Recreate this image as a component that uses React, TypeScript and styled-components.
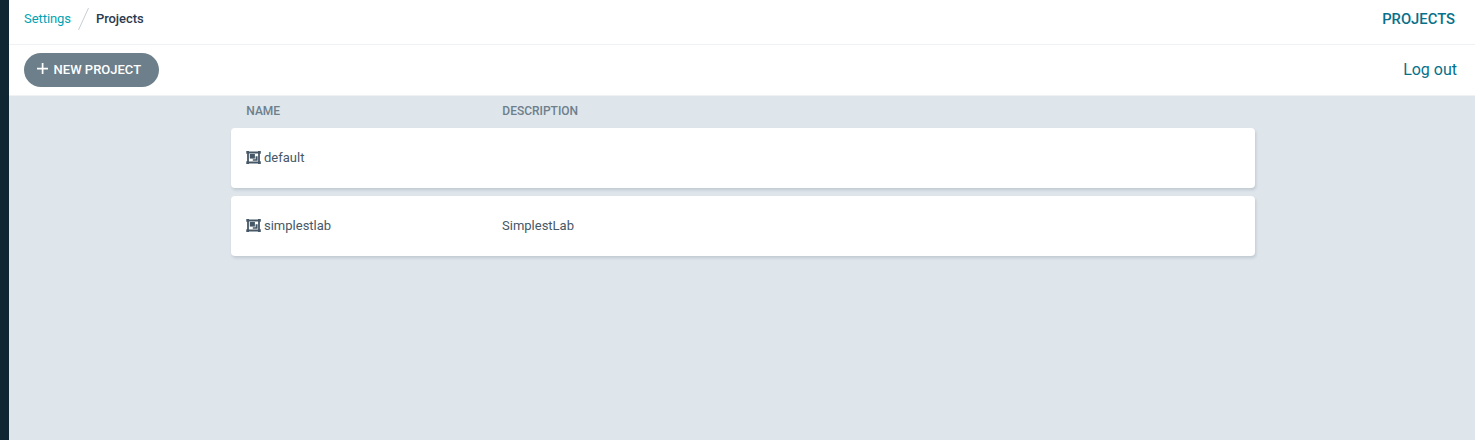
import React from 'react';
import styled, { createGlobalStyle } from 'styled-components';

const Global = createGlobalStyle`
  * { box-sizing: border-box; }
  body { margin: 0; font-family: Roboto, sans-serif; font-size: 13px; color: #465867; }
`;
const Page = styled.div`
  display: flex;
  height: 440px;
  overflow: hidden;
`;
const Rail = styled.aside`
  width: 9px;
  flex: none;
  background: #0f2732;
`;
const Main = styled.main`
  flex: 1;
  background: #dee5eb;
`;
const Bar = styled.header<{ $height: number }>`
  display: flex;
  align-items: center;
  justify-content: space-between;
  height: ${p => p.$height}px;
  padding: 0 18px 0 15px;
  background: #fff;
  border-bottom: 1px solid #eff1f2;
`;
const TopBar = styled(Bar)`
  padding: 0 20px 7px 15px;
`;
const Crumbs = styled.nav`
  display: flex;
  align-items: center;
`;
const CrumbLink = styled.a`
  color: #00a3b4;
  letter-spacing: -0.06px;
`;
const Slash = styled.svg`
  margin: 0 7px;
`;
const Current = styled.span`
  font-weight: 500;
  color: #2b3a4e;
  letter-spacing: -0.08px;
`;
const Section = styled.span`
  font-size: 14.8px;
  font-weight: 500;
  color: #07708a;
`;
const NewButton = styled.button`
  display: flex;
  align-items: center;
  gap: 5.6px;
  width: 135px;
  height: 34px;
  padding: 0 0 2px 13px;
  border: 0;
  border-radius: 17px;
  background: #6d7f8b;
  color: #fff;
  font: 500 13px Roboto, sans-serif;
`;
const LogOut = styled.a`
  padding-bottom: 2px;
  font-size: 16px;
  color: #07708a;
`;
const Table = styled.section`
  width: 1024px;
  margin: 0 0 0 222px;
`;
const Columns = styled.div`
  display: grid;
  grid-template-columns: 256px 1fr;
  align-items: center;
  padding: 0 15px;
`;
const Head = styled(Columns)`
  height: 32px;
  padding: 0 15px 2px 15.3px;
  font-size: 12px;
  font-weight: 500;
  color: #6d7f8b;
`;
const Row = styled(Columns)`
  height: 60px;
  margin-bottom: 8px;
  padding-bottom: 2px;
  background: #fff;
  border-radius: 4px;
  box-shadow: 1px 2px 3px rgba(60, 80, 95, 0.18);
`;
const Name = styled.span`
  display: flex;
  align-items: center;
  gap: 3px;
`;

const GroupIcon = () => (
  <svg width="15" height="13" viewBox="0 0 15 13" fill="#465867">
    <path d="M2 1.5H13V11.5H2Z" fill="none" stroke="#465867" strokeWidth="1.8" />
    <path d="M.3 0H3V2.7H.3ZM12 0H14.8V2.7H12ZM.3 10.3H3V13H.3ZM12 10.3H14.8V13H12Z" />
    <path d="M3.8 3H8.9V7.6H3.8Z" />
    <path d="M9.6 5.2H11.6V9.8H6.8V8.3H9.6Z" />
  </svg>
);

const projects = [
  { name: 'default', description: '' },
  { name: 'simplestlab', description: 'SimplestLab' },
];

export default function App() {
  return (
    <Page>
      <Global />
      <Rail />
      <Main>
        <TopBar $height={45}>
          <Crumbs>
            <CrumbLink>Settings</CrumbLink>
            <Slash width="11" height="24" viewBox="0 0 11 24">
              <path d="M10.5 1L.5 23" stroke="#c6ced3" fill="none" />
            </Slash>
            <Current>Projects</Current>
          </Crumbs>
          <Section>PROJECTS</Section>
        </TopBar>
        <Bar $height={51}>
          <NewButton>
            <svg width="11" height="12" viewBox="0 0 11 12">
              <path d="M5.6 0v11M0 5.6h11" stroke="#fff" strokeWidth="1.7" />
            </svg>
            NEW PROJECT
          </NewButton>
          <LogOut>Log out</LogOut>
        </Bar>
        <Table>
          <Head><span>NAME</span><span>DESCRIPTION</span></Head>
          {projects.map(p => (
            <Row key={p.name}>
              <Name><GroupIcon />{p.name}</Name>
              <span>{p.description}</span>
            </Row>
          ))}
        </Table>
      </Main>
    </Page>
  );
}
